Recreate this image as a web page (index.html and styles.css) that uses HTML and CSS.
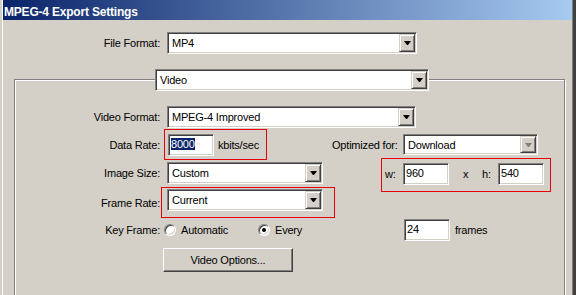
FILE: index.html
```html
<!DOCTYPE html>
<html lang="en">
<head>
    <meta charset="UTF-8">
    <meta name="viewport" content="width=device-width, initial-scale=1.0">
    <title>MPEG-4 Export Settings</title>
    <link rel="stylesheet" href="styles.css">
</head>
<body>
    <div class="window">
        <div class="frame">
            <div class="titlebar">MPEG-4 Export Settings</div>

            <div class="row file-row">
                <span class="label top-label">File Format:</span>
                <div class="combo file-combo"><span class="value">MP4</span><span class="arrow"></span></div>
            </div>

            <div class="group">
                <div class="group-head">
                    <div class="combo head-combo"><span class="value">Video</span><span class="arrow"></span></div>
                </div>

                <div class="row vf-row">
                    <span class="label">Video Format:</span>
                    <div class="combo vf-combo"><span class="value">MPEG-4 Improved</span><span class="arrow"></span></div>
                </div>

                <div class="split">
                    <div class="left-col">
                        <div class="row">
                            <span class="label">Data Rate:</span>
                            <div class="redbox rate-box">
                                <div class="field rate-field"><span class="selected">8000</span></div>
                                <span class="unit">kbits/sec</span>
                            </div>
                        </div>
                        <div class="row size-row">
                            <span class="label">Image Size:</span>
                            <div class="combo small-combo"><span class="value">Custom</span><span class="arrow"></span></div>
                        </div>
                        <div class="row fps-row">
                            <span class="label">Frame Rate:</span>
                            <div class="redbox fps-box">
                                <div class="combo small-combo"><span class="value">Current</span><span class="arrow"></span></div>
                            </div>
                        </div>
                    </div>

                    <div class="right-col">
                        <div class="row">
                            <span class="opt-label">Optimized for:</span>
                            <div class="combo opt-combo disabled"><span class="value">Download</span><span class="arrow"></span></div>
                        </div>
                        <div class="redbox wh-box">
                            <span class="w-label">w:</span>
                            <div class="field dim-field">960</div>
                            <span class="x-label">x</span>
                            <span class="h-label">h:</span>
                            <div class="field dim-field">540</div>
                        </div>
                    </div>
                </div>

                <div class="row kf-row">
                    <span class="label">Key Frame:</span>
                    <label class="option auto-option"><span class="radio"></span>Automatic</label>
                    <label class="option every-option"><span class="radio checked"></span>Every</label>
                    <div class="field kf-field">24</div>
                    <span class="unit">frames</span>
                </div>

                <div class="row btn-row">
                    <button class="btn">Video Options...</button>
                </div>
            </div>
        </div>
    </div>
</body>
</html>
```

FILE: styles.css
```css
* {
    margin: 0;
    padding: 0;
    box-sizing: border-box;
}

body {
    font-family: "Liberation Sans", Arial, sans-serif;
    font-size: 11px;
    letter-spacing: -0.2px;
    color: #000;
    background: #d4d0c8;
    overflow: hidden;
}

.window {
    width: 576px;
    height: 295px;
    padding-left: 2px;
    background: #d4d0c8;
    border-right: 3px solid #404040;
    overflow: hidden;
}

.frame {
    height: 100%;
    border-left: 1px solid #fff;
    border-right: 1px solid #808080;
}

.titlebar {
    height: 20px;
    padding: 4px 0 0 1px;
    line-height: 16px;
    font-size: 12px;
    font-weight: bold;
    color: #fff;
    white-space: nowrap;
    background: linear-gradient(90deg, #0a246a, #a6caf0);
}

.row {
    display: flex;
    align-items: center;
}

.row > * {
    flex: none;
}

.label {
    width: 145px;
    margin-right: 7px;
    text-align: right;
    white-space: nowrap;
}

.top-label {
    width: 157px;
}

.file-row {
    margin-top: 12px;
}

/* sunken 3d controls */
.combo,
.field {
    height: 22px;
    background: #fff;
    border: 1px solid;
    border-color: #808080 #fff #fff #808080;
    box-shadow: inset 1px 1px #404040, inset -1px -1px #d4d0c8;
}

.combo {
    display: flex;
    padding: 1px;
}

.combo .value {
    flex: 1;
    padding-left: 3px;
    line-height: 18px;
    white-space: nowrap;
}

.combo .arrow {
    width: 16px;
    display: flex;
    align-items: center;
    justify-content: center;
    background: #d4d0c8;
    border: 1px solid;
    border-color: #d4d0c8 #404040 #404040 #d4d0c8;
    box-shadow: inset 1px 1px #fff, inset -1px -1px #808080;
}

.combo .arrow::after {
    content: "";
    width: 1px;
    border-left: 3px solid transparent;
    border-right: 3px solid transparent;
    border-top: 4px solid #000;
}

.combo.disabled .arrow::after {
    border-top-color: #808080;
}

.field {
    padding-left: 2px;
    line-height: 18px;
}

.file-combo {
    width: 250px;
}

.group {
    width: 551px;
    height: 240px;
    margin: 25px 0 0 11px;
    border: 1px solid #808080;
    box-shadow: inset 1px 1px #fff, 1px 1px #fff;
}

.group-head {
    display: flex;
    margin-top: -11px;
    padding-left: 140px;
}

.head-combo {
    width: 274px;
}

.vf-row {
    margin-top: 15px;
}

.vf-combo {
    width: 249px;
}

.split {
    display: flex;
    margin-top: 1px;
}

.left-col {
    width: 320px;
    flex: none;
}

/* red highlight frames drawn over the dialog */
.redbox {
    display: flex;
    align-items: center;
    border: 1px solid #e60000;
}

.rate-box {
    width: 103px;
    margin-left: -3px;
    padding: 4px 0 3px 3px;
}

.rate-field {
    width: 46px;
    margin-right: 4px;
    flex: none;
}

.selected {
    background: #0a246a;
    color: #fff;
}

.size-row {
    margin-top: 2px;
}

.small-combo {
    width: 156px;
    flex: none;
}

.fps-row {
    margin-top: 3px;
}

.fps-box {
    width: 174px;
    margin-left: -6px;
    padding: 1px 0 6px 5px;
}

.right-col {
    margin-left: -3px;
    padding-top: 5px;
}

.opt-label {
    width: 71px;
    white-space: nowrap;
}

.opt-combo {
    width: 135px;
    height: 21px;
}

.wh-box {
    margin: 3px 0 0 49px;
    width: 170px;
    padding: 4px 0 6px 3px;
}

.wh-box > * {
    flex: none;
}

.w-label {
    width: 18px;
}

.dim-field {
    width: 46px;
}

.x-label {
    width: 33px;
    padding-left: 14px;
}

.h-label {
    width: 16px;
}

.kf-row {
    margin-top: 1px;
}

.option {
    display: flex;
    align-items: center;
    white-space: nowrap;
}

.auto-option {
    width: 94px;
    margin-left: -3px;
}

.every-option {
    width: 146px;
}

.radio {
    width: 12px;
    height: 12px;
    margin-right: 5px;
    display: flex;
    align-items: center;
    justify-content: center;
    border-radius: 50%;
    background: #fff;
    border: 1px solid;
    border-color: #808080 #fff #fff #808080;
    box-shadow: inset 1px 1px #404040, inset -1px -1px #d4d0c8;
}

.radio.checked::after {
    content: "";
    width: 4px;
    height: 4px;
    border-radius: 50%;
    background: #000;
}

.kf-field {
    width: 46px;
    margin-right: 5px;
}

.btn-row {
    margin-top: 7px;
}

.btn {
    width: 130px;
    height: 24px;
    margin-left: 148px;
    font: inherit;
    letter-spacing: inherit;
    color: #000;
    background: #d4d0c8;
    border: 1px solid;
    border-color: #fff #404040 #404040 #fff;
    box-shadow: inset -1px -1px #808080;
}
```
